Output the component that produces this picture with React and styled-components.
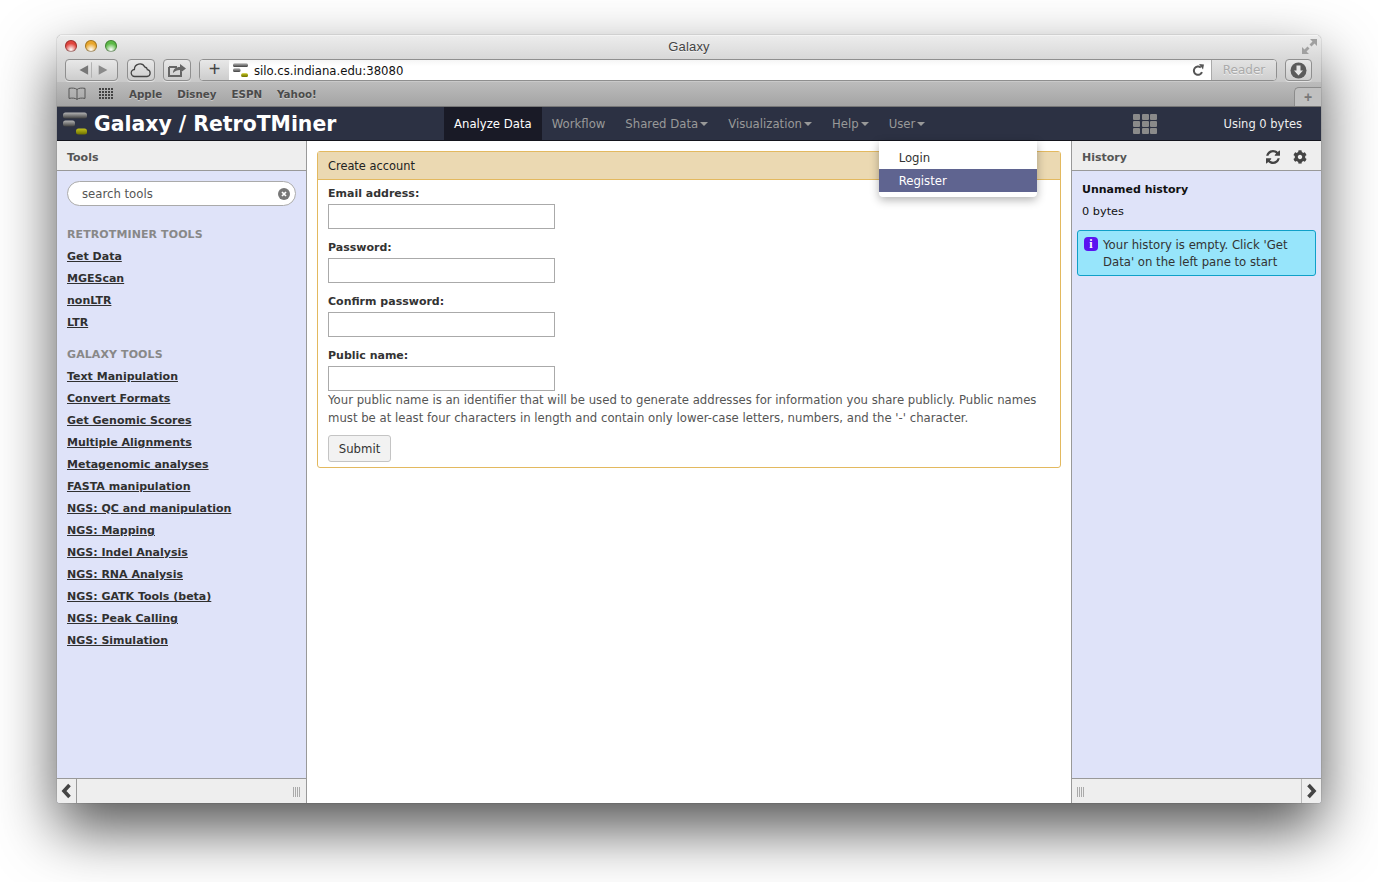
import React from 'react';
import styled, { createGlobalStyle } from 'styled-components';
import { FaCog } from 'react-icons/fa';

const FONT = '"DejaVu Sans", "Liberation Sans", sans-serif';

const retroTools = ['Get Data', 'MGEScan', 'nonLTR', 'LTR'];
const galaxyTools = [
	'Text Manipulation',
	'Convert Formats',
	'Get Genomic Scores',
	'Multiple Alignments',
	'Metagenomic analyses',
	'FASTA manipulation',
	'NGS: QC and manipulation',
	'NGS: Mapping',
	'NGS: Indel Analysis',
	'NGS: RNA Analysis',
	'NGS: GATK Tools (beta)',
	'NGS: Peak Calling',
	'NGS: Simulation',
];
const fields = ['Email address:', 'Password:', 'Confirm password:', 'Public name:'];
const tabs = [
	{ label: 'Workflow' },
	{ label: 'Shared Data', caret: true },
	{ label: 'Visualization', caret: true },
	{ label: 'Help', caret: true },
];

const GalaxyLogo = ({ size = 24 }) => (
	<svg width={size} height={size} viewBox="0 0 24 23">
		<defs>
			<linearGradient id="bar" x1="0" y1="0" x2="0" y2="1">
				<stop offset="0" stopColor="#b5b5b5" />
				<stop offset="1" stopColor="#3f3f3f" />
			</linearGradient>
			<linearGradient id="barGreen" x1="0" y1="0" x2="0" y2="1">
				<stop offset="0" stopColor="#c2c21c" />
				<stop offset="1" stopColor="#6e7000" />
			</linearGradient>
		</defs>
		<rect x="0" y="0" width="24" height="6" rx="2.5" fill="url(#bar)" />
		<rect x="0" y="8" width="12" height="6" rx="2.5" fill="url(#bar)" />
		<rect x="13" y="16" width="11" height="6" rx="2.5" fill="url(#barGreen)" />
	</svg>
);

const RefreshIcon = () => (
	<svg width="14" height="14" viewBox="0 0 1536 1536">
		<path
			fill="#444"
			d="M1511 928q0 5-1 7-64 268-268 434.500t-478 166.500q-146 0-282.500-55t-243.500-157l-129 129q-19 19-45 19t-45-19-19-45v-448q0-26 19-45t45-19h448q26 0 45 19t19 45-19 45l-137 137q71 66 161 102t187 36q134 0 250-65t186-179q11-17 53-117 8-23 30-23h192q13 0 22.500 9.500t9.500 22.500zm25-800v448q0 26-19 45t-45 19h-448q-26 0-45-19t-19-45 19-45l138-138q-148-137-349-137-134 0-250 65t-186 179q-11 17-53 117-8 23-30 23h-199q-13 0-22.500-9.500t-9.500-22.500v-7q65-268 270-434.500t480-166.500q146 0 284 55.500t245 156.500l130-129q19-19 45-19t45 19 19 45z"
		/>
	</svg>
);

const Chevron = ({ points }) => (
	<svg width="11" height="16" viewBox="0 0 11 16">
		<polyline points={points} fill="none" stroke="#444" strokeWidth="3.600" />
	</svg>
);

const App = () => (
	<>
		<GlobalStyle />
		<Page>
			<Window>
				<TitleBar>
					<Lights>
						<Light $color="#e0443e" />
						<Light $color="#e8a62c" />
						<Light $color="#5cb947" />
					</Lights>
					<WindowTitle>Galaxy</WindowTitle>
					<FullScreen width="15" height="15" viewBox="0 0 15 15">
						<path d="M15 0v7l-2.500-2.500-3 3-2-2 3-3L8 0zM0 15V8l2.500 2.500 3-3 2 2-3 3L7 15z" fill="#a0a0a0" />
					</FullScreen>
				</TitleBar>
				<Toolbar>
					<ChromeButton $width={53}>
						<svg width="53" height="20" viewBox="0 0 53 20">
							<path d="M14 10l9-5v10z" fill="#777" />
							<path d="M26.500 2v16" stroke="#b0b0b0" />
							<path d="M43 10l-9-5v10z" fill="#8a8a8a" />
						</svg>
					</ChromeButton>
					<ChromeButton $width={28} $gap={9}>
						<svg width="22" height="16" viewBox="0 0 22 16">
							<path d="M5 14.500a3.500 3.500 0 0 1-.6-7A5.500 5.500 0 0 1 14.800 5a3.200 3.200 0 0 1 2.600 2.600A3.500 3.500 0 0 1 17 14.500z" fill="none" stroke="#444" strokeWidth="1.300" />
						</svg>
					</ChromeButton>
					<ChromeButton $width={28}>
						<svg width="20" height="16" viewBox="0 0 20 16">
							<path d="M2 5h8M2 5v9h12v-4" fill="none" stroke="#666" strokeWidth="2" />
							<path d="M6 11c0-4 3-6 7-6V2l6 4.500-6 4.500V8c-3 0-5 1-7 3z" fill="#666" />
						</svg>
					</ChromeButton>
					<AddressBar>
						<PlusCell>+</PlusCell>
						<AddressField>
							<GalaxyLogo size={15} />
							<AddressText>silo.cs.indiana.edu:38080</AddressText>
							<svg width="12" height="13" viewBox="0 0 12 13">
								<path d="M10 8.200A4.200 4.200 0 1 1 8.800 3.400" fill="none" stroke="#555" strokeWidth="2" />
								<path d="M7 0l5 .5-1 5z" fill="#555" />
							</svg>
						</AddressField>
						<ReaderCell>Reader</ReaderCell>
					</AddressBar>
					<ChromeButton $width={27}>
						<svg width="17" height="17" viewBox="0 0 17 17">
							<circle cx="8.500" cy="8.500" r="8" fill="#5b5b5b" />
							<path d="M6.500 3.500h4v5h2.500l-4.500 5-4.500-5h2.500z" fill="#e6e6e6" />
						</svg>
					</ChromeButton>
				</Toolbar>
				<BookmarksBar>
					<svg width="18" height="13" viewBox="0 0 18 13">
						<path d="M9 2.500C7.500 1 4 .8 1 1.400v10c3-.6 6.500-.4 8 1 1.500-1.400 5-1.600 8-1v-10C14 .8 10.500 1 9 2.500zM9 2.500v9.800" fill="none" stroke="#555" />
					</svg>
					<TopSites>
						{Array.from({ length: 20 }).map((_, i) => (
							<i key={i} />
						))}
					</TopSites>
					<Bookmark>Apple</Bookmark>
					<Bookmark>Disney</Bookmark>
					<Bookmark>ESPN</Bookmark>
					<Bookmark>Yahoo!</Bookmark>
					<NewTab>+</NewTab>
				</BookmarksBar>
				<Masthead>
					<Brand>
						<GalaxyLogo size={24} />
						<BrandName>Galaxy / RetroTMiner</BrandName>
					</Brand>
					<Nav>
						<NavTab $active>Analyze Data</NavTab>
						{tabs.map((tab) => (
							<NavTab key={tab.label}>
								{tab.label}
								{tab.caret && <Caret />}
							</NavTab>
						))}
						<NavTab>
							User
							<Caret />
							<Dropdown>
								<DropdownItem>Login</DropdownItem>
								<DropdownItem $active>Register</DropdownItem>
							</Dropdown>
						</NavTab>
					</Nav>
					<GridIcon>
						{Array.from({ length: 9 }).map((_, i) => (
							<i key={i} />
						))}
					</GridIcon>
					<Quota>Using 0 bytes</Quota>
				</Masthead>
				<Panels>
					<SidePanel $side="left">
						<PanelHeader>
							<PanelTitle>Tools</PanelTitle>
						</PanelHeader>
						<PanelBody>
							<SearchBox>
								<span>search tools</span>
								<ClearIcon width="12" height="12" viewBox="0 0 12 12">
									<circle cx="6" cy="6" r="6" fill="#777" />
									<path d="M4 4l4 4M8 4l-4 4" stroke="#fff" strokeWidth="1.700" />
								</ClearIcon>
							</SearchBox>
							<ToolSection>
								<SectionTitle>RETROTMINER TOOLS</SectionTitle>
								{retroTools.map((name) => (
									<ToolLink key={name}>{name}</ToolLink>
								))}
							</ToolSection>
							<ToolSection>
								<SectionTitle>GALAXY TOOLS</SectionTitle>
								{galaxyTools.map((name) => (
									<ToolLink key={name}>{name}</ToolLink>
								))}
							</ToolSection>
						</PanelBody>
						<PanelFooter>
							<CollapseCell>
								<Chevron points="8.500,2 3,8 8.500,14" />
							</CollapseCell>
							<GripRow>
								<Grip />
							</GripRow>
						</PanelFooter>
					</SidePanel>
					<Center>
						<FormCard>
							<FormHeader>Create account</FormHeader>
							<FormBody>
								{fields.map((label) => (
									<Field key={label}>
										<FieldLabel>{label}</FieldLabel>
										<TextInput />
									</Field>
								))}
								<Help>
									Your public name is an identifier that will be used to generate addresses for
									information you share publicly. Public names must be at least four characters in
									length and contain only lower-case letters, numbers, and the '-' character.
								</Help>
								<SubmitButton>Submit</SubmitButton>
							</FormBody>
						</FormCard>
					</Center>
					<SidePanel $side="right">
						<PanelHeader>
							<PanelTitle>History</PanelTitle>
							<HeaderIcons>
								<RefreshIcon />
								<FaCog size={14} color="#444" />
							</HeaderIcons>
						</PanelHeader>
						<HistoryBody>
							<HistoryName>Unnamed history</HistoryName>
							<HistorySize>0 bytes</HistorySize>
							<InfoBox>
								<InfoIcon>i</InfoIcon>
								Your history is empty. Click 'Get Data' on the left pane to start
							</InfoBox>
						</HistoryBody>
						<PanelFooter>
							<GripRow $flip>
								<Grip />
							</GripRow>
							<CollapseCell $right>
								<Chevron points="2.500,2 8,8 2.500,14" />
							</CollapseCell>
						</PanelFooter>
					</SidePanel>
				</Panels>
			</Window>
		</Page>
	</>
);

const GlobalStyle = createGlobalStyle`
	html, body {
		margin: 0;
		background: #fff;
	}
	body {
		font-family: ${FONT};
		font-size: 11.7px;
	}
	* {
		box-sizing: border-box;
	}
`;

const Page = styled.div`
	width: 1378px;
	height: 882px;
	padding: 35px 57px 0;
	overflow: hidden;
`;

const Window = styled.div`
	width: 1264px;
	height: 768px;
	display: flex;
	flex-direction: column;
	border-radius: 5px 5px 3px 3px;
	box-shadow: 0 26px 60px rgba(0, 0, 0, 0.68), 0 0 1px rgba(0, 0, 0, 0.7);
	overflow: hidden;
	background: #fff;
`;

const TitleBar = styled.div`
	height: 23px;
	display: flex;
	align-items: center;
	justify-content: center;
	position: relative;
	padding-bottom: 2px;
	background: linear-gradient(#ececec, #d9d9d9);
	border-top: 1px solid #f4f4f4;
`;

const Lights = styled.div`
	position: absolute;
	left: 8px;
	top: 4px;
	display: flex;
	gap: 8px;
`;

const Light = styled.span`
	width: 12px;
	height: 12px;
	border-radius: 50%;
	background: radial-gradient(circle at 50% 80%, #fff 0, ${(p) => p.$color} 55%);
	box-shadow: inset 0 0 0 1px rgba(0, 0, 0, 0.3);
`;

const WindowTitle = styled.div`
	font-size: 13px;
	font-family: "Liberation Sans", sans-serif;
	color: #444;
	letter-spacing: 0.2px;
	text-shadow: 0 1px 0 rgba(255, 255, 255, 0.6);
`;

const FullScreen = styled.svg`
	position: absolute;
	right: 4px;
	top: 3px;
`;

const Toolbar = styled.div`
	height: 24px;
	display: flex;
	align-items: flex-start;
	padding: 1px 9px 0 8px;
	background: linear-gradient(#d9d9d9, #c9c9c9);
	gap: 8px;
`;

const ChromeButton = styled.div`
	width: ${(p) => p.$width}px;
	height: 22px;
	flex: none;
	margin-left: ${(p) => (p.$gap ? p.$gap - 8 : 0)}px;
	display: flex;
	align-items: center;
	justify-content: center;
	border: 1px solid #8f8f8f;
	border-radius: 4px;
	background: linear-gradient(#e8e8e8, #cdcdcd);
	box-shadow: 0 1px 0 rgba(255, 255, 255, 0.5);
`;

const AddressBar = styled.div`
	flex: 1;
	height: 22px;
	display: flex;
	border: 1px solid #8f8f8f;
	border-radius: 4px;
	overflow: hidden;
	background: #fff;
`;

const PlusCell = styled.div`
	width: 29px;
	flex: none;
	text-align: center;
	font: 20px/18px "Liberation Sans", sans-serif;
	color: #444;
	background: linear-gradient(#e8e8e8, #cdcdcd);
`;

const AddressField = styled.div`
	flex: 1;
	display: flex;
	align-items: center;
	padding: 0 7px 0 4px;
	gap: 6px;
	background: linear-gradient(#f5f5f5, #fff 30%);
`;

const AddressText = styled.div`
	flex: 1;
	font-size: 11.700px;
	padding-top: 1px;
	color: #111;
`;

const ReaderCell = styled.div`
	width: 65px;
	flex: none;
	text-align: center;
	font-size: 12px;
	line-height: 20px;
	color: #aaa;
	border-left: 1px solid #aaa;
	background: linear-gradient(#e3e3e3, #cfcfcf);
	text-shadow: 0 1px 0 #eee;
`;

const BookmarksBar = styled.div`
	height: 25px;
	display: flex;
	align-items: center;
	position: relative;
	padding: 0 0 1px 11px;
	background: linear-gradient(#bcbcbc, #a4a4a4);
	border-bottom: 1px solid #777;
`;

const TopSites = styled.div`
	display: grid;
	grid-template-columns: repeat(5, 2px);
	gap: 1px;
	margin: 0 16px 0 13px;

	i {
		width: 2px;
		height: 2px;
		background: #444;
	}
`;

const Bookmark = styled.div`
	font-size: 10.300px;
	font-weight: bold;
	color: #4b4b4b;
	margin-right: 15px;
	text-shadow: 0 1px 0 rgba(255, 255, 255, 0.4);
`;

const NewTab = styled.div`
	position: absolute;
	right: 0;
	bottom: 0;
	width: 27px;
	height: 19px;
	text-align: center;
	font: bold 14px/19px "Liberation Sans", sans-serif;
	color: #777;
	border: 1px solid #8c8c8c;
	border-bottom: none;
	border-right: none;
	border-radius: 5px 0 0 0;
	background: #c0c0c0;
`;

const Masthead = styled.div`
	height: 34px;
	flex: none;
	display: flex;
	align-items: center;
	padding: 0 19px 0 6px;
	background: #2c3143;
	border-bottom: 1px solid #14151d;
`;

const Brand = styled.div`
	width: 381px;
	flex: none;
	display: flex;
	align-items: center;
	gap: 7px;
`;

const BrandName = styled.div`
	font-size: 20.400px;
	font-weight: bold;
	color: #fff;
	white-space: nowrap;
`;

const Nav = styled.div`
	display: flex;
	height: 100%;
	flex: 1;
`;

const NavTab = styled.div`
	position: relative;
	display: flex;
	align-items: center;
	height: 33px;
	padding: 0 10px;
	font-size: 11.700px;
	color: ${(p) => (p.$active ? '#fff' : '#999')};
	background: ${(p) => (p.$active ? '#191a26' : 'transparent')};
`;

const Caret = styled.span`
	width: 0;
	height: 0;
	margin-left: 2px;
	border-left: 4px solid transparent;
	border-right: 4px solid transparent;
	border-top: 4px solid #999;
`;

const Dropdown = styled.div`
	position: absolute;
	z-index: 5;
	top: calc(100% + 1px);
	left: 0;
	width: 158px;
	padding: 5px 0;
	background: #fff;
	border-radius: 0 0 4px 4px;
	box-shadow: 0 3px 10px rgba(0, 0, 0, 0.3);
`;

const DropdownItem = styled.div`
	height: 23px;
	line-height: 24px;
	padding-left: 20px;
	color: ${(p) => (p.$active ? '#fff' : '#333')};
	background: ${(p) => (p.$active ? '#5f6490' : 'transparent')};
`;

const GridIcon = styled.div`
	display: grid;
	grid-template-columns: repeat(3, 7px);
	grid-auto-rows: 6px;
	gap: 1px 1.500px;
	margin-right: 66px;

	i {
		background: #8a8a8a;
		border-radius: 1px;
	}
`;

const Quota = styled.div`
	font-size: 11.500px;
	color: #eee;
`;

const Panels = styled.div`
	flex: 1;
	min-height: 0;
	display: flex;
`;

const SidePanel = styled.div`
	width: 250px;
	flex: none;
	display: flex;
	flex-direction: column;
	background: #dfe3f9;
	${(p) => (p.$side === 'left' ? 'border-right: 1px solid #999;' : 'border-left: 1px solid #999;')}
`;

const PanelHeader = styled.div`
	height: 30px;
	flex: none;
	display: flex;
	align-items: center;
	justify-content: space-between;
	padding: 3px 14px 0 10px;
	background: #eee;
	border-bottom: 1px solid #999;
`;

const PanelTitle = styled.div`
	font-size: 11px;
	font-weight: bold;
	color: #555;
`;

const HeaderIcons = styled.div`
	display: flex;
	gap: 13px;
`;

const PanelBody = styled.div`
	flex: 1;
	min-height: 0;
	padding: 10px 10px 0;
`;

const SearchBox = styled.div`
	width: 229px;
	height: 25px;
	display: flex;
	align-items: center;
	justify-content: space-between;
	padding: 0 5px 0 14px;
	border: 1px solid #aaa;
	border-radius: 13px;
	background: #fff;
	color: #555;
`;

const ClearIcon = styled.svg`
	flex: none;
`;

const ToolSection = styled.div`
	margin-top: 18px;
	display: flex;
	flex-direction: column;

	& + & {
		margin-top: 10px;
	}
`;

const SectionTitle = styled.div`
	height: 22px;
	line-height: 22px;
	font-size: 11px;
	font-weight: bold;
	letter-spacing: 0.1px;
	color: #888;
`;

const ToolLink = styled.a`
	height: 22px;
	line-height: 22px;
	font-size: 11px;
	font-weight: bold;
	color: #303030;
	text-decoration: underline;
	white-space: nowrap;
`;

const PanelFooter = styled.div`
	height: 25px;
	flex: none;
	display: flex;
	background: #eee;
	border-top: 1px solid #999;
`;

const CollapseCell = styled.div`
	width: 20px;
	flex: none;
	display: flex;
	align-items: center;
	justify-content: center;
	${(p) => (p.$right ? 'border-left: 1px solid #bbb;' : 'border-right: 1px solid #999;')}
`;

const GripRow = styled.div`
	flex: 1;
	display: flex;
	align-items: center;
	justify-content: ${(p) => (p.$flip ? 'flex-start' : 'flex-end')};
	padding: 0 5px;
`;

const Grip = styled.span`
	width: 8px;
	height: 10px;
	margin-top: 2px;
	background: repeating-linear-gradient(90deg, #aaa 0 1px, transparent 1px 2px);
`;

const Center = styled.div`
	flex: 1;
	min-width: 0;
	padding: 10px 10px 0;
	background: #fff;
`;

const FormCard = styled.div`
	border: 1px solid #e3b95f;
	border-radius: 3px;
`;

const FormHeader = styled.div`
	height: 28px;
	line-height: 28px;
	padding-left: 10px;
	font-size: 11.400px;
	color: #222;
	background: #ebd9b2;
	border-bottom: 1px solid #e3b95f;
`;

const FormBody = styled.div`
	padding: 4px 10px 5px;
`;

const Field = styled.div`
	display: flex;
	flex-direction: column;
	& + & {
		margin-top: 9px;
	}
`;

const FieldLabel = styled.label`
	height: 20px;
	line-height: 20px;
	font-size: 11px;
	font-weight: bold;
	color: #333;
`;

const TextInput = styled.input`
	width: 227px;
	height: 25px;
	border: 1px solid #aaa;
	background: #fff;
`;

const Help = styled.div`
	width: 722px;
	line-height: 18px;
	color: #555;
`;

const SubmitButton = styled.button`
	display: block;
	margin-top: 8px;
	width: 63px;
	height: 27px;
	padding: 0;
	font-family: ${FONT};
	font-size: 11.700px;
	color: #333;
	background: #f2f2f2;
	border: 1px solid #c4c4c4;
	border-radius: 3px;
`;

const HistoryBody = styled.div`
	flex: 1;
	min-height: 0;
	padding: 8px 5px 0;
`;

const HistoryName = styled.div`
	height: 22px;
	line-height: 22px;
	padding-left: 5px;
	font-size: 11px;
	font-weight: bold;
	color: #111;
`;

const HistorySize = styled.div`
	height: 22px;
	line-height: 22px;
	padding-left: 5px;
	font-size: 11.300px;
	color: #111;
`;

const InfoBox = styled.div`
	position: relative;
	margin-top: 7px;
	height: 46px;
	padding: 6px 5px 0 25px;
	line-height: 17px;
	color: #333;
	background: #97e5fb;
	border: 1px solid #10a0c8;
	border-radius: 3px;
`;

const InfoIcon = styled.span`
	position: absolute;
	left: 6px;
	top: 6px;
	width: 14px;
	height: 14px;
	border-radius: 4px;
	background: #5a14f0;
	color: #fff;
	font: bold 12px/14px "Liberation Serif", serif;
	text-align: center;
`;

export default App;
